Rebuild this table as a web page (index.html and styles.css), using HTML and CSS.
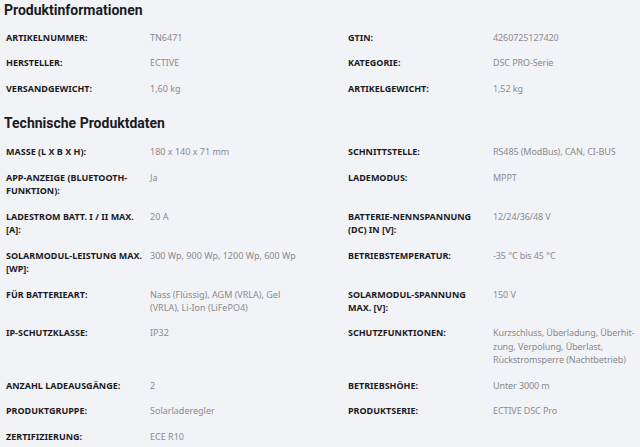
FILE: index.html
```html
<!DOCTYPE html>
<html lang="de">
<head>
<meta charset="utf-8">
<title>Produktinformationen</title>
<link rel="stylesheet" href="styles.css">
</head>
<body>
<section class="block">
  <h2 class="title">Produktinformationen</h2>
  <div class="specs">
    <div class="lbl">Artikelnummer:</div><div class="val">TN6471</div>
    <div class="lbl">GTIN:</div><div class="val">4260725127420</div>
    <div class="lbl">Hersteller:</div><div class="val">ECTIVE</div>
    <div class="lbl">Kategorie:</div><div class="val">DSC PRO-Serie</div>
    <div class="lbl">Versandgewicht:</div><div class="val">1,60 kg</div>
    <div class="lbl">Artikelgewicht:</div><div class="val">1,52 kg</div>
  </div>
</section>
<section class="block second">
  <h2 class="title">Technische Produktdaten</h2>
  <div class="specs">
    <div class="lbl">Masse (L x B x H):</div><div class="val">180 x 140 x 71 mm</div>
    <div class="lbl">Schnittstelle:</div><div class="val">RS485 (ModBus), CAN, CI-BUS</div>
    <div class="lbl">App-Anzeige (Bluetooth-Funktion):</div><div class="val">Ja</div>
    <div class="lbl">Lademodus:</div><div class="val">MPPT</div>
    <div class="lbl">Ladestrom Batt. I / II max. [A]:</div><div class="val">20 A</div>
    <div class="lbl">Batterie-Nennspannung (DC) in [V]:</div><div class="val">12/24/36/48 V</div>
    <div class="lbl">Solarmodul-Leistung max. [Wp]:</div><div class="val">300 Wp, 900 Wp, 1200 Wp, 600 Wp</div>
    <div class="lbl">Betriebstemperatur:</div><div class="val">-35 °C bis 45 °C</div>
    <div class="lbl">Für Batterieart:</div><div class="val">Nass (Flüssig), AGM (VRLA), Gel (VRLA), Li-Ion (LiFePO4)</div>
    <div class="lbl">Solarmodul-Spannung max. [V]:</div><div class="val">150 V</div>
    <div class="lbl">IP-Schutzklasse:</div><div class="val">IP32</div>
    <div class="lbl">Schutzfunktionen:</div><div class="val">Kurzschluss, Überladung, Überhit&shy;zung, Verpolung, Überlast, Rückstromsperre (Nachtbetrieb)</div>
    <div class="lbl">Anzahl Ladeausgänge:</div><div class="val">2</div>
    <div class="lbl">Betriebshöhe:</div><div class="val">Unter 3000 m</div>
    <div class="lbl">Produktgruppe:</div><div class="val">Solarladeregler</div>
    <div class="lbl">Produktserie:</div><div class="val">ECTIVE DSC Pro</div>
    <div class="lbl">Zertifizierung:</div><div class="val">ECE R10</div>
  </div>
</section>
</body>
</html>
```
FILE: styles.css
```css
html, body {
  margin: 0;
  padding: 0;
  background: #f2f3f7;
}
body {
  font-family: "Noto Sans", "Open Sans", sans-serif;
  color: #1b1b1f;
  padding: 1px 0 0 4px;
}
.title {
  margin: 0;
  font-family: Roboto, "Noto Sans", sans-serif;
  font-size: 14px;
  line-height: 18px;
  font-weight: 700;
}
.block.second {
  margin-top: 13px;
}
.block.second .specs {
  margin-top: 7px;
}
.specs {
  display: grid;
  grid-template-columns: 144px 198px 145px 1fr;
  margin-top: 6px;
  padding-left: 2px;
}
.lbl, .val {
  padding: 6px 0;
  font-size: 9px;
  line-height: 13.45px;
}
.lbl {
  font-weight: 700;
  text-transform: uppercase;
  padding-right: 2px;
  color: #1b1b1f;
}
.val {
  color: #8a8a8e;
  padding-right: 44px;
}
.val:nth-child(4n) {
  padding-right: 0;
  letter-spacing: -0.1px;
}
```
